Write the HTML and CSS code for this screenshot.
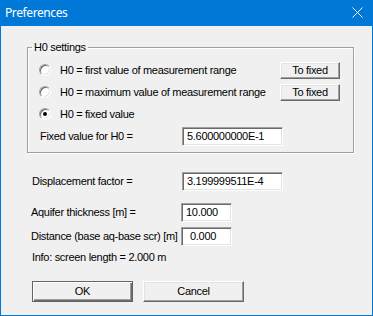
FILE: index.html
```html
<!DOCTYPE html>
<html>

<head>
	<meta http-equiv="Content-Type" content="text/html; charset=utf-8" />
	<title>Preferences</title>
	<link rel="stylesheet" href="styles.css">
</head>

<body>
	<div class="window">
		<div class="titlebar">
			<span class="title">Preferences</span>
			<svg class="close" width="11" height="11" viewBox="0 0 11 11">
				<path d="M0.5 0.5 L10.5 10.5 M10.5 0.5 L0.5 10.5" stroke="#fff" stroke-width="1" fill="none" />
			</svg>
		</div>
		<div class="client">
			<fieldset class="group">
				<legend>H0 settings</legend>
				<div class="opt">
					<span class="radio"></span>
					<span class="opt-text">H0 = first value of measurement range</span>
					<a class="btn btn-small" href="javascript:;">To fixed</a>
				</div>
				<div class="opt">
					<span class="radio"></span>
					<span class="opt-text">H0 = maximum value of measurement range</span>
					<a class="btn btn-small" href="javascript:;">To fixed</a>
				</div>
				<div class="opt">
					<span class="radio on"></span>
					<span class="opt-text">H0 = fixed value</span>
				</div>
				<div class="field field-in">
					<span class="lbl">Fixed value for H0 =</span>
					<span class="edit edit-wide">5.600000000E-1</span>
				</div>
			</fieldset>

			<div class="field field-disp">
				<span class="lbl">Displacement factor =</span>
				<span class="edit edit-wide">3.199999511E-4</span>
			</div>
			<div class="field field-aq">
				<span class="lbl">Aquifer thickness [m] =</span>
				<span class="edit edit-short">10.000</span>
			</div>
			<div class="field field-dist">
				<span class="lbl">Distance (base aq-base scr) [m]</span>
				<span class="edit edit-short edit-indent">0.000</span>
			</div>
			<p class="info">Info: screen length = 2.000 m</p>

			<div class="buttons">
				<a class="btn btn-big btn-default" href="javascript:;">OK</a>
				<a class="btn btn-big" href="javascript:;">Cancel</a>
			</div>
		</div>
	</div>
</body>

</html>
```

FILE: styles.css
```css
html,
body,
div,
p,
fieldset,
legend {
	margin: 0;
	padding: 0;
}

body {
	color: #000;
	font: 11px/13px "Liberation Sans", Arial, sans-serif;
	letter-spacing: -0.3px;
	background: #fff;
}

a {
	color: #000;
	text-decoration: none;
}

.window {
	width: 373px;
	height: 316px;
	box-sizing: border-box;
	border: 1px solid #0078d7;
	border-top: 0;
	background: #f0f0f0;
}

.titlebar {
	display: flex;
	align-items: center;
	height: 26px;
	margin: 0 -1px;
	padding: 0 10px 0 5px;
	background: #0078d7;
	color: #fff;
}

.title {
	font: 12px/16px "Noto Sans", "Open Sans", sans-serif;
	letter-spacing: -0.4px;
	margin-top: -1px;
}

.close {
	margin-left: auto;
	margin-top: -1px;
}

.client {
	padding: 0 0 0 26px;
}

/* group box */
.group {
	width: 327px;
	box-sizing: border-box;
	margin-top: 15px;
	padding: 5px 0 5px 0;
	border: 1px solid #a0a0a0;
	box-shadow: 1px 1px 0 #fff, inset 1px 1px 0 #fff;
	min-inline-size: 0;
}

.group legend {
	margin-left: 4px;
	padding: 0 2px;
	line-height: 13px;
}

.opt {
	display: flex;
	align-items: center;
	height: 22px;
	padding-left: 11px;
}

.radio {
	position: relative;
	width: 10px;
	height: 10px;
	border: 1px solid;
	border-color: #a0a0a0 #fff #fff #a0a0a0;
	border-radius: 50%;
	background: #fff;
	box-shadow: inset 1px 1px 0 #696969, inset -1px -1px 0 #e3e3e3;
}

.radio.on::after {
	content: "";
	position: absolute;
	left: 3px;
	top: 3px;
	width: 4px;
	height: 4px;
	border-radius: 50%;
	background: #000;
}

.opt-text {
	margin-left: 9px;
}

.btn {
	display: flex;
	align-items: center;
	justify-content: center;
	box-sizing: border-box;
	background: #f0f0f0;
	border: 1px solid;
	border-color: #fff #696969 #696969 #fff;
	box-shadow: inset -1px -1px 0 #a0a0a0, inset 1px 1px 0 #e3e3e3;
}

.btn-small {
	width: 60px;
	height: 17px;
	margin-left: auto;
	margin-right: 13px;
}

.btn-big {
	width: 101px;
	height: 21px;
}

.btn-default {
	border: 1px solid #646464;
	box-shadow: inset 1px 1px 0 #fff, inset -1px -1px 0 #696969, inset -2px -2px 0 #a0a0a0;
}

/* label + edit rows */
.field {
	display: flex;
	align-items: center;
	height: 19px;
}

.field-in {
	height: 22px;
	padding-left: 12px;
}

.field-in .lbl {
	width: 142px;
}

.lbl {
	width: 150px;
	white-space: nowrap;
}

.edit {
	box-sizing: border-box;
	height: 19px;
	padding: 2px 0 0 4px;
	background: #fff;
	border: 1px solid;
	border-color: #a0a0a0 #fff #fff #a0a0a0;
	box-shadow: inset 1px 1px 0 #696969, inset -1px -1px 0 #e3e3e3;
}

.edit-wide {
	width: 101px;
}

.edit-short {
	width: 51px;
}

.edit-indent {
	padding-left: 8px;
}

.field-disp {
	margin-top: 19px;
	padding-left: 5px;
}

.field-aq {
	margin-top: 12px;
	padding-left: 4px;
}

.field-dist {
	margin-top: 5px;
	padding-left: 4px;
}

.info {
	margin-top: 5px;
	padding-left: 5px;
}

.buttons {
	display: flex;
	gap: 10px;
	margin-top: 17px;
	padding-left: 5px;
}
```
